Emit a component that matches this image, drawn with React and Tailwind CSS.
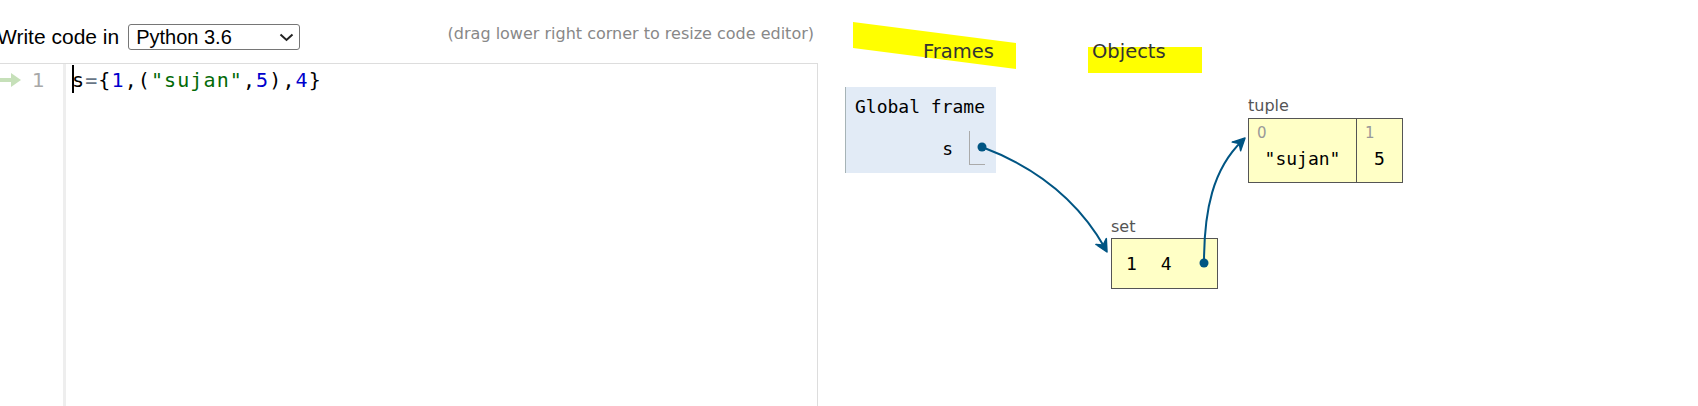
import React from "react";

const mono = "font-['DejaVu_Sans_Mono',monospace]";
const verd = "font-['DejaVu_Sans',sans-serif]";
const arial = "font-['Liberation_Sans',Arial,sans-serif]";

function GutterArrow() {
  return (
    <svg width="22" height="14" viewBox="0 0 22 14" className="block">
      <rect x="0" y="5" width="12" height="4" fill="#c6e0b9" />
      <polygon points="11,0 21,7 11,14" fill="#c6e0b9" />
    </svg>
  );
}

function Editor() {
  return (
    <div className="flex w-[818px] shrink-0 flex-col">
      {/* barra superior */}
      <div className="flex h-[63px] items-start justify-between">
        <div className="-ml-[3px] mt-[24px] flex items-center gap-[9px]">
          <span className={`${arial} text-[21px] leading-[26px] text-black`}>Write code in</span>
          <div className="relative flex h-[26px] w-[172px] items-center rounded-[3px] border border-[#767676] pl-[7px]">
            <span className={`${arial} text-[20px] leading-[24px] text-black`}>Python 3.6</span>
            <svg width="15" height="9" viewBox="0 0 15 9" className="absolute right-[5px] top-[8px]">
              <polyline points="1.5,1.5 7.5,7 13.5,1.5" fill="none" stroke="#222" strokeWidth="2" />
            </svg>
          </div>
        </div>
        <span className={`${verd} mr-[4px] mt-[22px] text-[16px] leading-[24px] text-[#888]`}>
          (drag lower right corner to resize code editor)
        </span>
      </div>

      {/* editor */}
      <div className="flex flex-1 border-t border-r border-[#ddd]">
        <div className="w-[66px] shrink-0 border-r-[3px] border-[#eeeeee]">
          <div className="mt-[1px] flex h-[30px] items-center">
            <GutterArrow />
            <span className={`${verd} ml-[10px] text-[20px] leading-[30px] text-[#a8a8a8]`}>1</span>
          </div>
        </div>
        <div className="pl-[6px]">
          <div className={`${mono} relative mt-[1px] h-[30px] text-[20px] leading-[30px] tracking-[1.1px] text-black`}>
            <span className="absolute left-0 top-[0px] h-[28px] w-[2px] bg-black" />
            <span>s</span>
            <span className="text-[#687687]">=</span>
            <span>{"{"}</span>
            <span className="text-[#0000cd]">1</span>
            <span>,(</span>
            <span className="text-[#036a07]">"sujan"</span>
            <span>,</span>
            <span className="text-[#0000cd]">5</span>
            <span>),</span>
            <span className="text-[#0000cd]">4</span>
            <span>{"}"}</span>
          </div>
        </div>
      </div>
    </div>
  );
}

function Visualizer() {
  return (
    <div className="relative flex-1 pt-[42px]">
      {/* encabezados */}
      <div className={`${verd} flex text-[19.5px] leading-[20px] text-[#333]`}>
        <span className="relative w-[274px] pl-[105px]">Frames</span>
        <span className="relative">Objects</span>
      </div>

      {/* frame global */}
      <div className="relative ml-[27px] mt-[25px] h-[86px] w-[151px] border-l border-[#a6b3b6] bg-[#e2ebf6] pt-[9px]">
        <div className={`${mono} pl-[9px] text-[18px] leading-[21px] text-black`}>Global frame</div>
        <div className="mt-[14px] flex items-center justify-end gap-[16px] pr-[11px]">
          <span className={`${mono} text-[18px] leading-[21px] text-black`}>s</span>
          <div className="h-[34px] w-[16px] border-b border-l border-[#aaa]" />
        </div>
      </div>

      {/* tuple */}
      <div className="absolute left-[430px] top-[97px]">
        <div className={`${verd} h-[18px] text-[16px] leading-[18px] text-[#555]`}>tuple</div>
        <div className="mt-[3px] flex h-[65px] border border-[#555] bg-[#ffffc6]">
          <div className="w-[107px]">
            <div className={`${verd} pl-[8px] pt-[6px] text-[15px] leading-[16px] text-[#999]`}>0</div>
            <div className={`${mono} mt-[8px] text-center text-[18px] leading-[20px] text-black`}>"sujan"</div>
          </div>
          <div className="w-[46px] border-l border-[#555]">
            <div className={`${verd} pl-[8px] pt-[6px] text-[15px] leading-[16px] text-[#999]`}>1</div>
            <div className={`${mono} mt-[8px] text-center text-[18px] leading-[20px] text-black`}>5</div>
          </div>
        </div>
      </div>

      {/* set */}
      <div className="absolute left-[293px] top-[218px]">
        <div className={`${verd} h-[18px] text-[16px] leading-[18px] text-[#555]`}>set</div>
        <div className={`${mono} mt-[2px] flex h-[51px] w-[107px] items-center gap-[24px] border border-[#555] bg-[#ffffc6] pl-[14px] text-[18px] leading-[20px] text-black`}>
          <span>1</span>
          <span>4</span>
        </div>
      </div>
    </div>
  );
}

export default function App() {
  return (
    <div className="relative flex h-[406px] w-[1698px] overflow-hidden bg-white">
      {/* resaltado amarillo */}
      <svg className="pointer-events-none absolute left-0 top-0" width="1698" height="406">
        <polygon points="853,22 1016,43 1016,69 853,48" fill="#ffff00" />
        <rect x="1088" y="47" width="114" height="26" fill="#ffff00" />
      </svg>

      <Editor />
      <Visualizer />

      {/* flechas */}
      <svg className="pointer-events-none absolute left-0 top-0" width="1698" height="406">
        <path d="M982 147 C1030 165 1075 195 1105 248" fill="none" stroke="#005583" strokeWidth="2" />
        <polygon points="1107,252 1095.9,244.4 1103.1,245 1106.3,238.6" fill="#005583" stroke="#005583" strokeWidth="1.5" strokeLinejoin="round" />
        <circle cx="982" cy="147" r="4.5" fill="#005583" />

        <path d="M1204 263 C1204 210 1213 169 1242 141" fill="none" stroke="#005583" strokeWidth="2" />
        <polygon points="1245,138 1240.6,150.7 1239.3,143.6 1232.2,142.1" fill="#005583" stroke="#005583" strokeWidth="1.5" strokeLinejoin="round" />
        <circle cx="1204" cy="263" r="4.5" fill="#005583" />
      </svg>
    </div>
  );
}
